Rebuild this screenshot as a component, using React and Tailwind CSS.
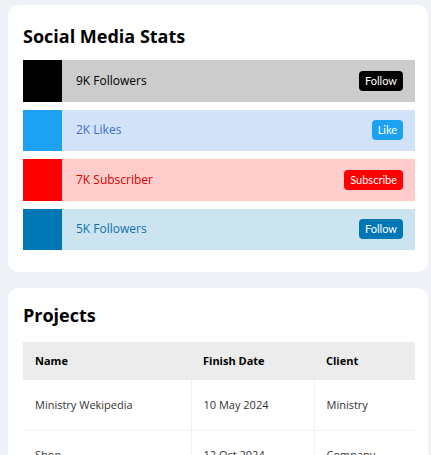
import React from "react";

const stats = [
  { label: "9K Followers", btn: "Follow", box: "bg-black", row: "bg-[#cccccc]", text: "text-black", button: "bg-black" },
  { label: "2K Likes", btn: "Like", box: "bg-[#1da1f2]", row: "bg-[#d2e3f9]", text: "text-[#3d6fcf]", button: "bg-[#1da1f2]" },
  { label: "7K Subscriber", btn: "Subscribe", box: "bg-[#ff0000]", row: "bg-[#ffcccc]", text: "text-[#e00000]", button: "bg-[#ff0000]" },
  { label: "5K Followers", btn: "Follow", box: "bg-[#0077b5]", row: "bg-[#cce4f0]", text: "text-[#0e6fb0]", button: "bg-[#0077b5]" },
];

const projects = [
  { name: "Ministry Wekipedia", date: "10 May 2024", client: "Ministry" },
  { name: "Shop", date: "12 Oct 2024", client: "Company" },
];

const App = () => {
  return (
    <div className="min-h-[455px] bg-[#eef1f6] pt-[5px] pl-[8px] font-['Open_Sans',sans-serif] text-black">
      {/* Social stats */}
      <div className="w-[420px] rounded-[10px] bg-white pl-[15px] pr-[13px] pt-[17px] pb-[22px]">
        <h2 className="text-[18px] font-bold leading-[28px]">Social Media Stats</h2>
        <div className="mt-[10px] flex flex-col gap-[8px]">
          {stats.map((s) => (
            <div key={s.label} className={`flex h-[41.5px] items-center ${s.row}`}>
              <div className={`h-full w-[39px] ${s.box}`} />
              <span className={`ml-[14px] text-[12px] ${s.text}`}>{s.label}</span>
              <button
                className={`ml-auto mr-[12px] h-[20px] rounded-[4px] px-[6px] text-[11px] leading-[20px] text-white font-['Lato',sans-serif] ${s.button}`}
              >
                {s.btn}
              </button>
            </div>
          ))}
        </div>
      </div>

      {/* Projects */}
      <div className="mt-[16px] w-[420px] rounded-[10px] bg-white pl-[15px] pr-[13px] pt-[13px] pb-[20px]">
        <h2 className="text-[18px] font-bold leading-[28px]">Projects</h2>
        <div className="mt-[13px] overflow-hidden">
          <table className="w-[480px] border-collapse text-left text-[11px]">
            <thead>
              <tr className="h-[38px] bg-[#ececec]">
                <th className="w-[168px] pl-[12px] font-bold">Name</th>
                <th className="w-[123px] pl-[12px] font-bold">Finish Date</th>
                <th className="pl-[12px] font-bold">Client</th>
              </tr>
            </thead>
            <tbody className="text-[#333]">
              {projects.map((p) => (
                <tr key={p.name} className="h-[50px] border-b border-[#f2f2f2]">
                  <td className="pl-[12px]">{p.name}</td>
                  <td className="border-l border-[#f2f2f2] pl-[12px]">{p.date}</td>
                  <td className="border-l border-[#f2f2f2] pl-[12px]">{p.client}</td>
                </tr>
              ))}
            </tbody>
          </table>
        </div>
      </div>
    </div>
  );
};

export default App;
